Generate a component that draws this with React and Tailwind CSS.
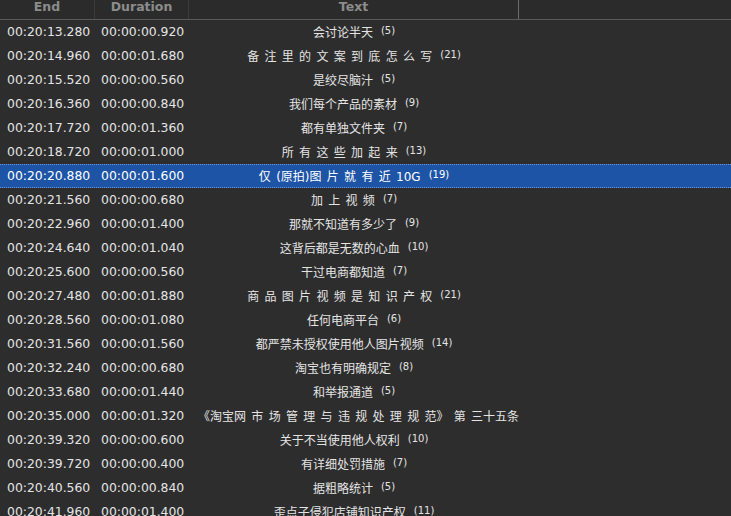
const rows = [
  ["00:20:13.280", "00:00:00.920", "会讨论半天", "5"],
  ["00:20:14.960", "00:00:01.680", "备 注 里 的 文 案 到 底 怎 么 写", "21"],
  ["00:20:15.520", "00:00:00.560", "是绞尽脑汁", "5"],
  ["00:20:16.360", "00:00:00.840", "我们每个产品的素材", "9"],
  ["00:20:17.720", "00:00:01.360", "都有单独文件夹", "7"],
  ["00:20:18.720", "00:00:01.000", "所 有 这 些 加 起 来", "13"],
  ["00:20:20.880", "00:00:01.600", "仅 (原拍)图 片 就 有 近 10G", "19"],
  ["00:20:21.560", "00:00:00.680", "加 上 视 频", "7"],
  ["00:20:22.960", "00:00:01.400", "那就不知道有多少了", "9"],
  ["00:20:24.640", "00:00:01.040", "这背后都是无数的心血", "10"],
  ["00:20:25.600", "00:00:00.560", "干过电商都知道", "7"],
  ["00:20:27.480", "00:00:01.880", "商 品 图 片 视 频 是 知 识 产 权", "21"],
  ["00:20:28.560", "00:00:01.080", "任何电商平台", "6"],
  ["00:20:31.560", "00:00:01.560", "都严禁未授权使用他人图片视频", "14"],
  ["00:20:32.240", "00:00:00.680", "淘宝也有明确规定", "8"],
  ["00:20:33.680", "00:00:01.440", "和举报通道", "5"],
  ["00:20:35.000", "00:00:01.320", "《淘宝网 市 场 管 理 与 违 规 处 理 规 范》 第 三十五条", null],
  ["00:20:39.320", "00:00:00.600", "关于不当使用他人权利", "10"],
  ["00:20:39.720", "00:00:00.400", "有详细处罚措施", "7"],
  ["00:20:40.560", "00:00:00.840", "据粗略统计", "5"],
  ["00:20:41.960", "00:00:01.400", "歪点子侵犯店铺知识产权", "11"],
];

const SELECTED = 6;

export default function App() {
  return (
    <div
      className="w-[731px] h-[516px] overflow-hidden bg-[#2d2d2d] text-[#e4e4e4]"
      style={{ fontFamily: '"DejaVu Sans", "Noto Sans CJK SC", sans-serif' }}
    >
      {/* header */}
      <div className="flex h-[20px] border-b border-[#5a5a5a] bg-[#2b2b2b] text-[12.5px] leading-[14px] font-bold text-[#8c8c8c]">
        <div className="w-[95px] border-r border-[#3c3c3c] flex justify-center">End</div>
        <div className="w-[94px] border-r border-[#3c3c3c] flex justify-center">Duration</div>
        <div className="w-[330px] border-r border-[#6a6a6a] flex justify-center">Text</div>
        <div className="flex-1" />
      </div>

      {rows.map((r, i) => {
        const sel = i === SELECTED;
        return (
          <div
            key={i}
            className={
              "flex h-[24px] items-center pt-px " +
              (sel ? "bg-[#1d54a6] border-y border-dotted border-[#6d97d8] text-white" : "")
            }
          >
            <div className="w-[95px] pl-[7px] whitespace-nowrap text-[12.4px]">{r[0]}</div>
            <div className="w-[94px] pl-[6px] whitespace-nowrap text-[12.4px]">{r[1]}</div>
            <div
              className={
                "w-[330px] flex whitespace-nowrap overflow-hidden text-[12px] [word-spacing:1.5px] " +
                (r[3] ? "justify-center" : "justify-start pl-[9px]")
              }
            >
              <span>
                {r[2]}
                {r[3] && (
                  <sup className="text-[10px] ml-[8px] relative top-[-3px] [word-spacing:0px]">({r[3]})</sup>
                )}
              </span>
            </div>
          </div>
        );
      })}
    </div>
  );
}
